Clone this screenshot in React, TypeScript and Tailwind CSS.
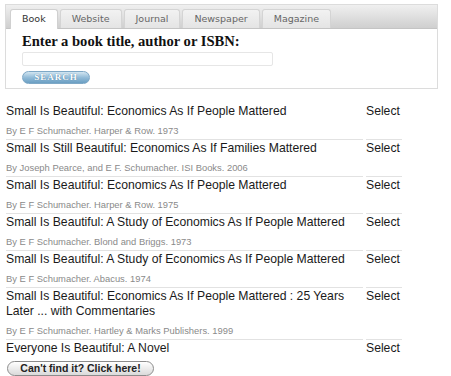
import React from "react";

const tabs = ["Book", "Website", "Journal", "Newspaper", "Magazine"];

const books: { title: string; sub?: string }[] = [
  { title: "Small Is Beautiful: Economics As If People Mattered", sub: "By E F Schumacher. Harper & Row. 1973" },
  { title: "Small Is Still Beautiful: Economics As If Families Mattered", sub: "By Joseph Pearce, and E F. Schumacher. ISI Books. 2006" },
  { title: "Small Is Beautiful: Economics As If People Mattered", sub: "By E F Schumacher. Harper & Row. 1975" },
  { title: "Small Is Beautiful: A Study of Economics As If People Mattered", sub: "By E F Schumacher. Blond and Briggs. 1973" },
  { title: "Small Is Beautiful: A Study of Economics As If People Mattered", sub: "By E F Schumacher. Abacus. 1974" },
  { title: "Small Is Beautiful: Economics As If People Mattered : 25 Years Later ... with Commentaries", sub: "By E F Schumacher. Hartley & Marks Publishers. 1999" },
  { title: "Everyone Is Beautiful: A Novel" },
];

export default function App() {
  return (
    <div className="w-[451px] h-[376px] bg-white overflow-hidden" style={{ fontFamily: '"Liberation Sans", Arial, sans-serif' }}>
      <div className="pt-[4px] pl-[5px]">
        <div className="w-[433px] h-[85px] border border-[#dcdcdc] bg-white flex flex-col">
          <div className="h-[24px] bg-gradient-to-b from-[#f0f0f0] to-[#cfcfcf] border-b border-[#c4c4c4] flex items-end pl-[4px] gap-[2px]">
            {tabs.map((t, i) => (
              <div
                key={t}
                className={
                  "px-[11px] flex items-center rounded-t-[3px] border border-b-0 text-[9.5px] " +
                  (i === 0
                    ? "bg-white border-[#d0d0d0] text-[#333] -mb-px h-[20px]"
                    : "h-[19px] bg-gradient-to-b from-[#f2f2f2] to-[#e4e4e4] border-[#d4d4d4] text-[#666]")
                }
                style={{ fontFamily: '"DejaVu Sans", Verdana, sans-serif' }}
              >
                {t}
              </div>
            ))}
          </div>
          <div className="pl-[16px] pt-[5px]">
            <div
              className="text-[14.6px] font-bold leading-[14px] text-[#111]"
              style={{ fontFamily: '"Liberation Serif", "Times New Roman", serif' }}
            >
              Enter a book title, author or ISBN:
            </div>
            <div className="mt-[4px] w-[251px] h-[14px] border border-[#e6e6e6] rounded-[2px] bg-white" />
            <div className="mt-[5px] w-[68px] h-[13px] rounded-full bg-gradient-to-b from-[#d2e5f1] via-[#93bcd8] to-[#6b9fc3] border border-[#7ea8c6] flex items-center justify-center">
              <span
                className="text-[9px] font-bold text-white tracking-[1px] leading-none"
                style={{ fontFamily: '"Liberation Serif", serif', textShadow: "0 0 1px #3d6f93" }}
              >
                SEARCH
              </span>
            </div>
          </div>
        </div>
      </div>

      <div className="pl-[6px] mt-[13px]">
        {books.map((b, i) => (
          <div key={i} className="grid grid-cols-[357px_36px] gap-x-[3px]">
            <div className={"pt-[1px] " + (i > 0 ? "border-t border-[#e2e2e2]" : "border-t border-transparent")}>
              <div className="text-[12.2px] leading-[15px] text-[#1a1a1a]">{b.title}</div>
              {b.sub && (
                <div className="mt-[6px] mb-[2px] text-[9.4px] leading-[12px] text-[#8a8a8a]">{b.sub}</div>
              )}
            </div>
            <div className={"pt-[1px] " + (i > 0 ? "border-t border-[#e2e2e2]" : "border-t border-transparent")}>
              <div className="text-[12.2px] leading-[15px] text-[#1a1a1a]">Select</div>
            </div>
          </div>
        ))}
        <div className="mt-[5px] flex">
          <div className="flex items-center justify-center w-[147px] h-[15px] rounded-full border border-[#8c8c8c] bg-gradient-to-b from-white to-[#dadada] ml-[1px]">
            <span className="text-[10.5px] font-bold text-[#222] leading-none">Can't find it? Click here!</span>
          </div>
        </div>
      </div>
    </div>
  );
}
